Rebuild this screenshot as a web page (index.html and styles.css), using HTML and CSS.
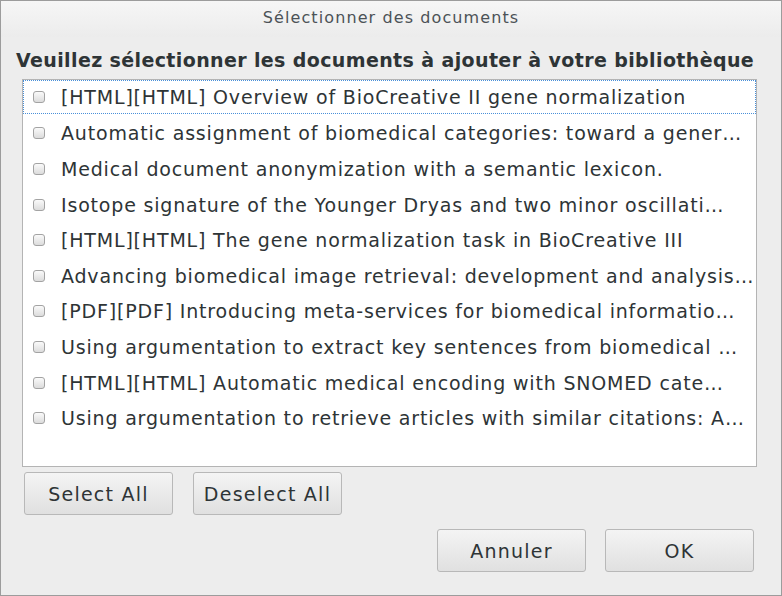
FILE: index.html
```html
<!DOCTYPE html>
<html lang="fr">
<head>
<meta charset="utf-8">
<link rel="stylesheet" href="styles.css">
</head>
<body>
<div class="window">
  <div class="titlebar">Sélectionner des documents</div>
  <div class="content">
    <h1 class="heading">Veuillez sélectionner les documents à ajouter à votre bibliothèque</h1>
    <div class="list">
      <label class="row focus"><span class="check"></span><span class="text">[HTML][HTML] Overview of BioCreative II gene normalization</span></label>
      <label class="row"><span class="check"></span><span class="text">Automatic assignment of biomedical categories: toward a gener…</span></label>
      <label class="row"><span class="check"></span><span class="text">Medical document anonymization with a semantic lexicon.</span></label>
      <label class="row"><span class="check"></span><span class="text">Isotope signature of the Younger Dryas and two minor oscillati…</span></label>
      <label class="row"><span class="check"></span><span class="text">[HTML][HTML] The gene normalization task in BioCreative III</span></label>
      <label class="row"><span class="check"></span><span class="text">Advancing biomedical image retrieval: development and analysis…</span></label>
      <label class="row"><span class="check"></span><span class="text">[PDF][PDF] Introducing meta-services for biomedical informatio…</span></label>
      <label class="row"><span class="check"></span><span class="text">Using argumentation to extract key sentences from biomedical …</span></label>
      <label class="row"><span class="check"></span><span class="text">[HTML][HTML] Automatic medical encoding with SNOMED cate…</span></label>
      <label class="row"><span class="check"></span><span class="text">Using argumentation to retrieve articles with similar citations: A…</span></label>
    </div>
    <div class="selbar">
      <button class="btn">Select All</button>
      <button class="btn">Deselect All</button>
    </div>
    <div class="actions">
      <button class="btn">Annuler</button>
      <button class="btn">OK</button>
    </div>
  </div>
</div>
</body>
</html>
```
FILE: styles.css
```css
* { box-sizing: border-box; }
html, body { margin: 0; padding: 0; }
body {
  width: 782px;
  height: 596px;
  font-family: "DejaVu Sans", sans-serif;
  color: #2e3436;
  background: #ededed;
}
.window {
  width: 782px;
  height: 596px;
  border: 1px solid #9c9c9c;
  background: #ededed;
  display: flex;
  flex-direction: column;
}
.titlebar {
  height: 36px;
  background: linear-gradient(#f6f6f6, #ececec);
  text-align: center;
  font-size: 16px;
  letter-spacing: 1.1px;
  line-height: 34px;
  color: #4c5257;
}
.content {
  padding: 0 24px 0 21px;
  display: flex;
  flex-direction: column;
}
.heading {
  margin: 4px 0 0 -6px;
  font-size: 19px;
  font-weight: bold;
  letter-spacing: 0.38px;
  line-height: 38px;
  height: 38px;
  white-space: nowrap;
  color: #2e3436;
}
.list {
  height: 388px;
  background: #fff;
  border: 1px solid #b4b4b4;
  padding: 0;
  display: flex;
  flex-direction: column;
}
.row {
  height: 35.6px;
  display: flex;
  align-items: center;
  padding-left: 9px;
  padding-right: 1px;
  border: 1px dotted transparent;
  font-size: 19px;
  letter-spacing: 0.82px;
  white-space: nowrap;
  overflow: hidden;
}
.row.focus {
  border: 1px dotted #4a90d9;
  height: 34px;
  margin-bottom: 1.6px;
}
.check {
  flex: none;
  width: 12px;
  height: 12px;
  border: 1px solid #a3a3a3;
  border-radius: 3px;
  background: linear-gradient(#fafafa, #dcdcdc);
  margin-right: 16px;
}
.text {
  overflow: hidden;
  text-overflow: ellipsis;
  min-width: 0;
}
.selbar {
  display: flex;
  gap: 20px;
  margin: 5px 0 0 2px;
}
.btn {
  width: 149px;
  height: 43px;
  border: 1px solid #b8b8b8;
  border-radius: 3px;
  background: linear-gradient(#f4f4f4, #e0e0e0);
  font-family: inherit;
  font-size: 19px;
  letter-spacing: 1.25px;
  color: #2e3436;
  padding: 0;
}
.actions {
  display: flex;
  justify-content: flex-end;
  gap: 19px;
  margin-top: 14px;
  margin-right: 3px;
}
```
